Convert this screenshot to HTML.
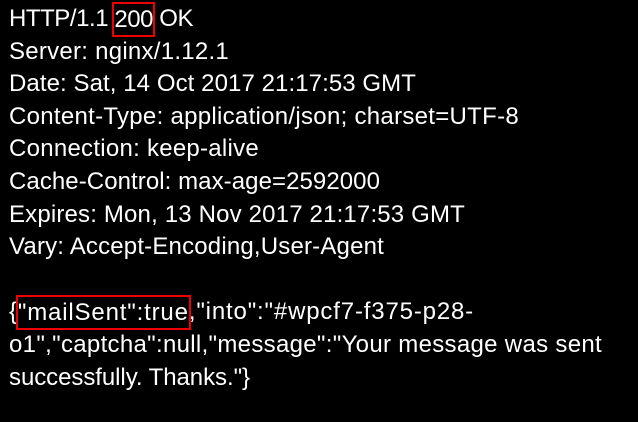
<html><head><style>
body{margin:0;background:#000;width:638px;height:422px;overflow:hidden}
.t{position:absolute;left:9px;top:3px;color:#fff;font-family:"Liberation Sans",sans-serif;font-size:24px;line-height:32.6px}
.t div{height:32.6px;white-space:nowrap}
.t span.l{display:inline-block;white-space:pre}
.b{display:inline-block;outline:2px solid #e00;line-height:31px;height:31px;vertical-align:top;margin-top:1px}
</style></head><body>
<div class="t"><div><span class="l">HTTP/1.1 <span class="b">200</span> OK</span></div><div><span class="l">Server: nginx/1.12.1</span></div><div><span class="l">Date: Sat, 14 Oct 2017 21:17:53 GMT</span></div><div><span class="l">Content-Type: application/json; charset=UTF-8</span></div><div><span class="l">Connection: keep-alive</span></div><div><span class="l">Cache-Control: max-age=2592000</span></div><div><span class="l">Expires: Mon, 13 Nov 2017 21:17:53 GMT</span></div><div><span class="l">Vary: Accept-Encoding,User-Agent</span></div><div></div><div><span class="l">{<span class="b">"mailSent":true</span>,"into":"#wpcf7-f375-p28-</span></div><div><span class="l">o1","captcha":null,"message":"Your message was sent</span></div><div><span class="l">successfully. Thanks."}</span></div></div>
<script>
var T=[193,229,416,519,259,380,465,384,474,602,250];
var L=document.querySelectorAll('span.l');
for(var i=0;i<L.length;i++){var e=L[i];var w=e.getBoundingClientRect().width;var n=e.textContent.length;var ls=(T[i]-9-w)/n;e.style.letterSpacing=ls+'px';}
</script>
</body></html>
